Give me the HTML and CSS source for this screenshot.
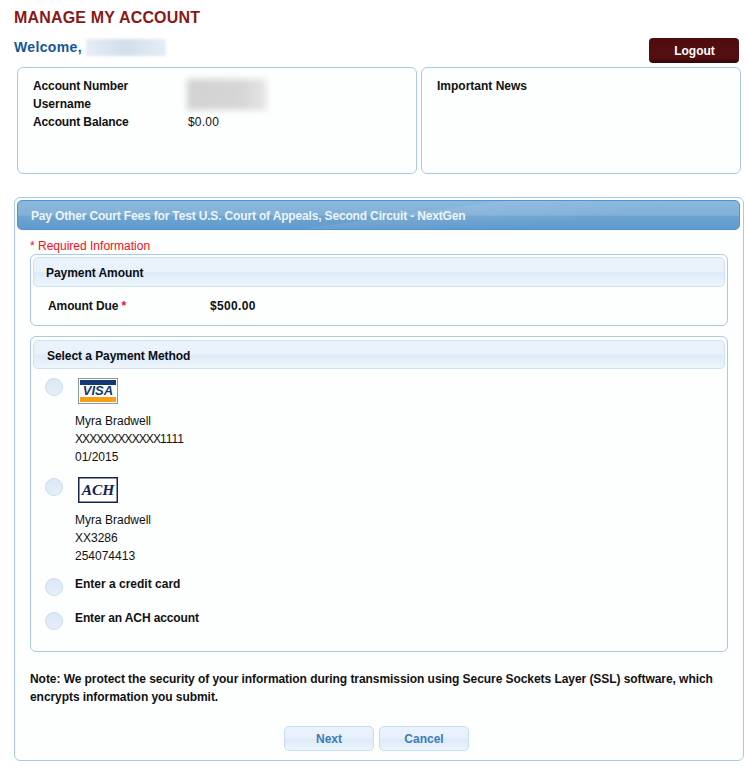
FILE: index.html
```html
<!DOCTYPE html>
<html lang="en">
<head>
    <meta charset="UTF-8">
    <title>Manage My Account</title>
    <link rel="stylesheet" href="styles.css">
</head>
<body>

    <h1 class="page-title">MANAGE MY ACCOUNT</h1>

    <div class="welcome-row">
        <div class="welcome">Welcome, <span class="blur blur-name"></span></div>
        <button class="logout-button">Logout</button>
    </div>

    <div class="info-row">
        <div class="info-box account-box">
            <div class="account-grid">
                <b class="tight">Account Number</b>
                <span class="blur blur-account"></span>
                <b>Username</b>
                <b class="tight">Account Balance</b>
                <span class="balance">$0.00</span>
            </div>
        </div>
        <div class="info-box news-box">
            <b>Important News</b>
        </div>
    </div>

    <div class="panel">
        <div class="panel-header">Pay Other Court Fees for Test U.S. Court of Appeals, Second Circuit - NextGen</div>

        <div class="panel-body">
            <div class="required-note">* Required Information</div>

            <div class="section amount-section">
                <div class="section-header">Payment Amount</div>
                <div class="amount-row">
                    <span class="amount-label">Amount Due <span class="star">*</span></span>
                    <span class="amount-value">$500.00</span>
                </div>
            </div>

            <div class="section method-section">
                <div class="section-header method-header">Select a Payment Method</div>

                <div class="method">
                    <input class="radio" type="radio" name="method">
                    <div class="method-info">
                        <svg class="card-logo" width="40" height="26" viewBox="0 0 40 26">
                            <rect x="0.5" y="0.5" width="39" height="25" fill="#fff" stroke="#8a97a8"/>
                            <rect x="2" y="2" width="36" height="5" fill="#123a70"/>
                            <rect x="2" y="19" width="36" height="5" fill="#f79f14"/>
                            <text x="20" y="17" class="visa-text" text-anchor="middle">VISA</text>
                        </svg>
                        <div class="method-lines">
                            Myra Bradwell<br>
                            <span class="masked">XXXXXXXXXXXX</span>1111<br>
                            01/2015
                        </div>
                    </div>
                </div>

                <div class="method second">
                    <input class="radio" type="radio" name="method">
                    <div class="method-info">
                        <svg class="card-logo" width="40" height="26" viewBox="0 0 40 26">
                            <rect x="0.75" y="0.75" width="38.5" height="24.5" fill="#fff" stroke="#13254f" stroke-width="1.5"/>
                            <text x="20" y="18" class="ach-text" text-anchor="middle">ACH</text>
                        </svg>
                        <div class="method-lines">
                            Myra Bradwell<br>
                            XX3286<br>
                            254074413
                        </div>
                    </div>
                </div>

                <div class="method-new first-new">
                    <input class="radio" type="radio" name="method">
                    <b>Enter a credit card</b>
                </div>
                <div class="method-new">
                    <input class="radio" type="radio" name="method">
                    <b class="tight">Enter an ACH account</b>
                </div>
            </div>

            <p class="ssl-note">Note: We protect the security of your information during transmission using Secure Sockets Layer (SSL) software, which encrypts information you submit.</p>

            <div class="buttons">
                <button class="light-button">Next</button>
                <button class="light-button">Cancel</button>
            </div>
        </div>
    </div>

</body>
</html>
```

FILE: styles.css
```css
body {
    margin: 0;
    padding: 0 3px 0 14px;
    background-color: #ffffff;
    color: #111111;
    font-family: "Liberation Sans", Arial, sans-serif;
    font-size: 12px;
    line-height: 18px;
}

.tight {
    letter-spacing: -0.12px;
}

.page-title {
    margin: 0;
    padding-top: 9px;
    font-size: 16px;
    line-height: 18px;
    letter-spacing: 0.18px;
    color: #8b1717;
}

.welcome-row {
    display: flex;
    justify-content: space-between;
    align-items: flex-start;
    height: 25px;
    margin-top: 11px;
    padding-right: 5px;
}

.welcome {
    display: flex;
    align-items: center;
    gap: 4px;
    font-size: 14px;
    font-weight: bold;
    letter-spacing: 0.35px;
    color: #14569b;
}

.blur {
    display: block;
}

.blur-name {
    width: 80px;
    height: 17px;
    background: linear-gradient(90deg, #e6edf4, #d2deeb 50%, #e6edf4);
    filter: blur(1.5px);
}

.logout-button {
    width: 90px;
    height: 25px;
    padding: 0 0 0 1px;
    border: none;
    border-radius: 4px;
    background: linear-gradient(#4f0c10 0%, #540f12 80%, #350508 100%);
    color: #ffffff;
    font-family: inherit;
    font-size: 12px;
    font-weight: bold;
}

.info-row {
    display: flex;
    gap: 4px;
    margin: 4px 0 0 3px;
}

.info-box {
    box-sizing: border-box;
    height: 107px;
    border: 1px solid #a8cae4;
    border-radius: 6px;
    background-color: #fdfefe;
    padding: 9px 15px;
}

.account-box {
    width: 400px;
}

.news-box {
    width: 320px;
}

.account-grid {
    display: grid;
    grid-template-columns: 153px 1fr;
}

.account-grid b {
    grid-column: 1;
}

.blur-account {
    grid-column: 2;
    grid-row: 1 / span 2;
    width: 80px;
    height: 31px;
    margin: 2px 0 0 1px;
    background: linear-gradient(90deg, #d2d2d2, #d6d6d6 70%, #e6e6e6);
    filter: blur(3px);
}

.balance {
    grid-column: 2;
    padding-left: 2px;
    letter-spacing: 0.2px;
}

.panel {
    box-sizing: border-box;
    width: 730px;
    margin-top: 23px;
    padding: 2px 3px 9px 2px;
    border: 1px solid #a8cae4;
    border-radius: 6px;
    background-color: #fdfefe;
}

.panel-header {
    box-sizing: border-box;
    height: 30px;
    padding: 0 0 0 13px;
    border: 1px solid #4b94d6;
    border-radius: 5px;
    background:
        linear-gradient(172deg, rgba(255, 255, 255, 0) 52%, rgba(255, 255, 255, 0.08) 53%, rgba(255, 255, 255, 0) 75%),
        linear-gradient(#8bb7da 0%, #82b1d8 50%, #6ca4d2 55%, #6199cb 100%);
    color: #eef4f9;
    font-weight: bold;
    line-height: 30px;
    letter-spacing: -0.16px;
}

.panel-body {
    padding: 0 12px 0 13px;
}

.required-note {
    height: 17px;
    margin-top: 7px;
    line-height: 19px;
    color: #f01020;
}

.section {
    box-sizing: border-box;
    border: 1px solid #a8cae4;
    border-radius: 6px;
    background-color: #fdfefe;
    padding: 2px;
}

.amount-section {
    height: 72px;
}

.method-section {
    height: 316px;
    margin-top: 10px;
    padding-top: 3px;
}

.section-header {
    box-sizing: border-box;
    height: 30px;
    padding-left: 12px;
    border: 1px solid #cfe0f0;
    border-radius: 5px;
    background: linear-gradient(#eaf3fc 0%, #e9f2fb 48%, #dcebf8 52%, #eef5fc 100%);
    color: #0d0d14;
    font-weight: bold;
    line-height: 30px;
    letter-spacing: -0.06px;
}

.method-header {
    height: 29px;
    padding-left: 13px;
    line-height: 30px;
}

.amount-row {
    display: flex;
    padding: 10px 0 0 15px;
    font-weight: bold;
}

.amount-label {
    width: 162px;
    letter-spacing: -0.1px;
}

.amount-value {
    letter-spacing: 0.35px;
}

.star {
    color: #f01020;
}

.method {
    display: flex;
    gap: 12px;
    margin-top: 9px;
    padding-left: 12px;
}

.method.second {
    margin-top: 11px;
}

.method.second .radio {
    margin-top: 1px;
}

.radio {
    appearance: none;
    flex: none;
    box-sizing: border-box;
    width: 18px;
    height: 18px;
    margin: 0;
    border: 1px solid #c9dcef;
    border-radius: 50%;
    background: linear-gradient(#dbe8f5, #e6eff9);
}

.card-logo {
    display: block;
    margin: 0 0 8px 3px;
}

.masked {
    letter-spacing: -0.92px;
}

.visa-text {
    fill: #14386f;
    font-family: "Liberation Sans", Arial, sans-serif;
    font-size: 13px;
    font-style: italic;
    font-weight: bold;
}

.ach-text {
    fill: #13254f;
    font-family: "Liberation Serif", "Times New Roman", serif;
    font-size: 15.5px;
    font-style: italic;
    font-weight: bold;
}

.method-new {
    display: flex;
    gap: 12px;
    margin-top: 13px;
    padding-left: 12px;
}

.method-new.first-new {
    margin-top: 10px;
}

.method-new .radio {
    margin-top: 3px;
}

.ssl-note {
    margin: 18px 0 0;
    font-weight: bold;
    letter-spacing: -0.06px;
}

.buttons {
    display: flex;
    justify-content: center;
    gap: 5px;
    margin-top: 20px;
    padding-right: 5px;
}

.light-button {
    box-sizing: border-box;
    width: 90px;
    height: 25px;
    padding: 0;
    border: 1px solid #c6dcf0;
    border-radius: 5px;
    background: linear-gradient(#eaf3fc 0%, #e8f1fb 48%, #dbeaf8 52%, #eef5fc 100%);
    color: #3b7cb8;
    font-family: inherit;
    font-size: 12px;
    font-weight: bold;
}
```
